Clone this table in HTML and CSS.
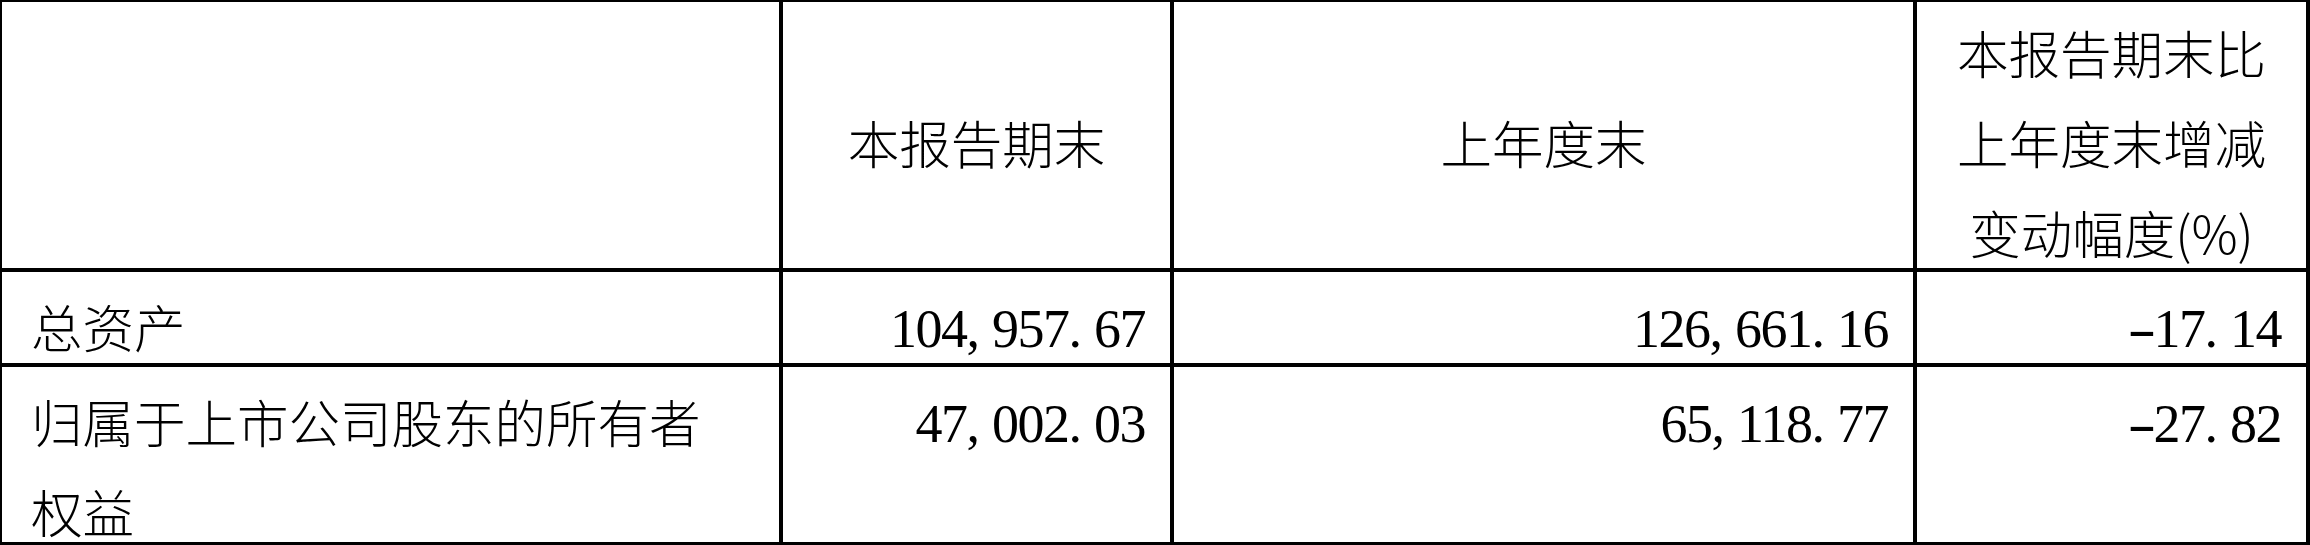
FILE: index.html
```html
<!DOCTYPE html>
<html lang="zh-CN">
<head>
<meta charset="utf-8">
<title>主要财务数据</title>
<link rel="stylesheet" href="styles.css">
</head>
<body>
<div class="table">
  <div class="cell head"></div>
  <div class="cell head single">本报告期末</div>
  <div class="cell head single">上年度末</div>
  <div class="cell head multi">本报告期末比<br>上年度末增减<br>变动幅度(%)</div>

  <div class="cell label r1">总资产</div>
  <div class="cell num r1">104<span class="p">,</span>957<span class="p">.</span>67</div>
  <div class="cell num r1">126<span class="p">,</span>661<span class="p">.</span>16</div>
  <div class="cell num r1"><span class="m">-</span>17<span class="p">.</span>14</div>

  <div class="cell label r2">归属于上市公司股东的所有者<br>权益</div>
  <div class="cell num r2">47<span class="p">,</span>002<span class="p">.</span>03</div>
  <div class="cell num r2">65<span class="p">,</span>118<span class="p">.</span>77</div>
  <div class="cell num r2"><span class="m">-</span>27<span class="p">.</span>82</div>
</div>
</body>
</html>
```

FILE: styles.css
```css
html, body {
  margin: 0;
  padding: 0;
  background: #fff;
}

.table {
  width: 2310px;
  height: 545px;
  box-sizing: border-box;
  display: grid;
  grid-template-columns: 777px 387px 739px 389px;
  grid-template-rows: 266px 91px 175px;
  column-gap: 4px;
  row-gap: 4px;
  padding: 2px 4px 3px 2px;
  background: #000;
  font-family: "Noto Sans CJK SC", "Noto Sans CJK JP", sans-serif;
  font-size: 51.5px;
  font-weight: 300;
  color: #000;
  line-height: 90px;
}

.cell {
  background: #fff;
  box-sizing: border-box;
  white-space: nowrap;
  overflow: visible;
}

.head {
  text-align: center;
}

.head.single {
  padding-top: 95px;
}

.head.multi {
  padding-top: 5px;
}

.label {
  padding-left: 29px;
  text-align: left;
}

.label.r1 {
  padding-top: 9px;
}

.label.r2 {
  padding-top: 9px;
}

.num {
  font-family: "Liberation Serif", "DejaVu Serif", serif;
  font-size: 54px;
  font-weight: 400;
  letter-spacing: -1.5px;
  text-align: right;
  padding-right: 25px;
}

.num.r1 {
  padding-top: 12px;
}

.num.r2 {
  padding-top: 12px;
}

.p {
  display: inline-block;
  width: 25.5px;
  text-align: left;
}

.m {
  display: inline-block;
  width: 25.5px;
  text-align: center;
  transform: scaleX(1.6);
}
```
